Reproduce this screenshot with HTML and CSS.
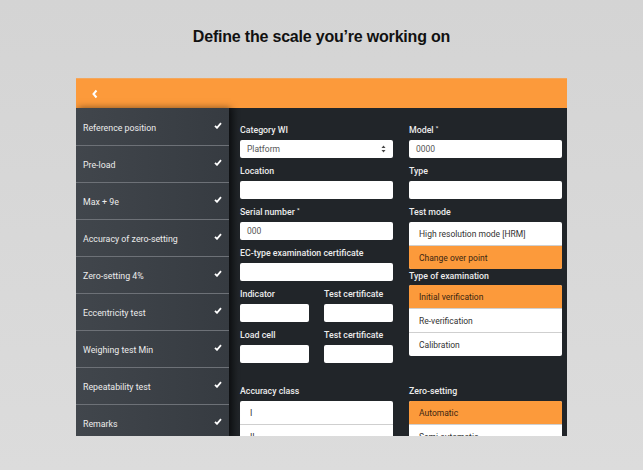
FILE: index.html
```html
<!DOCTYPE html>
<html lang="en">

<head>
    <meta charset="UTF-8">
    <meta name="viewport" content="width=device-width, initial-scale=1.0">
    <title>Define the scale</title>
    <link rel="stylesheet" href="styles.css">
</head>

<body>
    <h1 class="title">Define the scale you’re working on</h1>
    <div class="app">
        <div class="app-header">
            <svg class="back" width="8" height="10" viewBox="0 0 8 10">
                <polyline points="5.5,1.5 2.5,5 5.5,8.5" fill="none" stroke="#fff" stroke-width="2" />
            </svg>
        </div>
        <div class="app-body">
            <div class="sidebar">
                <div class="sidebar-item">Reference position<span class="check"></span></div>
                <div class="sidebar-item">Pre-load<span class="check"></span></div>
                <div class="sidebar-item">Max + 9e<span class="check"></span></div>
                <div class="sidebar-item">Accuracy of zero-setting<span class="check"></span></div>
                <div class="sidebar-item">Zero-setting 4%<span class="check"></span></div>
                <div class="sidebar-item">Eccentricity test<span class="check"></span></div>
                <div class="sidebar-item">Weighing test Min<span class="check"></span></div>
                <div class="sidebar-item">Repeatability test<span class="check"></span></div>
                <div class="sidebar-item">Remarks<span class="check"></span></div>
            </div>
            <div class="main">
                <div class="form-column">
                    <div class="field">
                        <div class="label">Category WI</div>
                        <div class="input select">Platform
                            <svg class="arrows" width="5" height="8" viewBox="0 0 5 8">
                                <polygon points="2.5,0.5 4.5,3 0.5,3" fill="#444" />
                                <polygon points="0.5,5 4.5,5 2.5,7.5" fill="#444" />
                            </svg>
                        </div>
                    </div>
                    <div class="field">
                        <div class="label">Location</div>
                        <div class="input"></div>
                    </div>
                    <div class="field">
                        <div class="label">Serial number <sup>*</sup></div>
                        <div class="input">000</div>
                    </div>
                    <div class="field">
                        <div class="label">EC-type examination certificate</div>
                        <div class="input"></div>
                    </div>
                    <div class="field-pair">
                        <div class="field">
                            <div class="label">Indicator</div>
                            <div class="input"></div>
                        </div>
                        <div class="field">
                            <div class="label">Test certificate</div>
                            <div class="input"></div>
                        </div>
                    </div>
                    <div class="field-pair">
                        <div class="field">
                            <div class="label">Load cell</div>
                            <div class="input"></div>
                        </div>
                        <div class="field">
                            <div class="label">Test certificate</div>
                            <div class="input"></div>
                        </div>
                    </div>
                </div>
                <div class="form-column">
                    <div class="field">
                        <div class="label">Model <sup>*</sup></div>
                        <div class="input">0000</div>
                    </div>
                    <div class="field">
                        <div class="label">Type</div>
                        <div class="input"></div>
                    </div>
                    <div class="field field-list">
                        <div class="label">Test mode</div>
                        <div class="options">
                            <div class="option">High resolution mode [HRM]</div>
                            <div class="option active">Change over point</div>
                        </div>
                    </div>
                    <div class="field field-list">
                        <div class="label label-tight">Type of examination</div>
                        <div class="options">
                            <div class="option active">Initial verification</div>
                            <div class="option">Re-verification</div>
                            <div class="option">Calibration</div>
                        </div>
                    </div>
                </div>
                <div class="form-column">
                    <div class="field">
                        <div class="label">Accuracy class</div>
                        <div class="options">
                            <div class="option">I</div>
                            <div class="option">II</div>
                        </div>
                    </div>
                </div>
                <div class="form-column">
                    <div class="field">
                        <div class="label">Zero-setting</div>
                        <div class="options">
                            <div class="option active">Automatic</div>
                            <div class="option">Semi automatic</div>
                        </div>
                    </div>
                </div>
            </div>
        </div>
    </div>
</body>

</html>
```

FILE: styles.css
```css
* {
    margin: 0;
    padding: 0;
    box-sizing: border-box;
}

body {
    height: 470px;
    overflow: hidden;
    background: linear-gradient(to bottom, #d4d4d4, #dcdcdc);
    font-family: Roboto, "Liberation Sans", sans-serif;
}

.title {
    margin: 27px 0 31px;
    line-height: 20px;
    text-align: center;
    font-family: "Liberation Sans", Arial, sans-serif;
    font-size: 16px;
    font-weight: bold;
    letter-spacing: -0.2px;
    color: #111;
}

.app {
    width: 491px;
    height: 358px;
    margin: 0 auto;
    overflow: hidden;
    background: #212529;
}

.app-header {
    height: 30px;
    background: #fc9a3b;
    border-top: 1px solid #f4a75c;
    display: flex;
    align-items: center;
    padding-left: 15px;
}

.back {
    display: block;
}

.app-body {
    display: flex;
    height: 328px;
}

.sidebar {
    width: 153px;
    flex-shrink: 0;
    position: relative;
    z-index: 2;
    background: linear-gradient(to right, #41464c, #363b41);
    box-shadow: 2px 0 7px rgba(0, 0, 0, .5);
}

.sidebar-item {
    height: 37px;
    display: flex;
    align-items: center;
    justify-content: space-between;
    padding: 1px 7px 0 7px;
    border-bottom: 1px solid #6d7177;
    color: #ececec;
    font-size: 8.8px;
    font-weight: 400;
}

.sidebar-item:first-child {
    height: 38px;
    padding-top: 2px;
}

.check {
    width: 8px;
    height: 7px;
    margin-top: -4px;
    background: url("data:image/svg+xml,%3Csvg xmlns='http://www.w3.org/2000/svg' viewBox='0 0 8 7'%3E%3Cpolyline points='1,3.8 3,5.8 7,1.2' fill='none' stroke='white' stroke-width='1.8'/%3E%3C/svg%3E") no-repeat center;
}

.main {
    flex: 1;
    padding: 15px 5px 0 11px;
    display: grid;
    grid-template-columns: 153px 153px;
    grid-template-rows: 245px auto;
    gap: 16px;
    background: linear-gradient(to right, #16191c, #212529 10px);
}

.form-column {
    display: flex;
    flex-direction: column;
}

.field {
    margin-bottom: 6px;
}

.field-list {
    margin-bottom: 0;
}

.field-pair {
    display: flex;
    gap: 15px;
}

.field-pair .field {
    flex: 1;
}

.label {
    height: 14px;
    line-height: 14px;
    margin-bottom: 3px;
    font-size: 8.8px;
    font-weight: 500;
    color: #ececec;
}

.label-tight {
    margin-bottom: 2px;
}

.label sup {
    font-size: 6px;
    line-height: 0;
    vertical-align: 3px;
}

.input {
    height: 18px;
    background: #fff;
    border-radius: 2px;
    padding: 0 7px;
    display: flex;
    align-items: center;
    font-size: 8.5px;
    color: #555;
}

.select {
    justify-content: space-between;
}

.options {
    background: #fff;
    border-radius: 2px;
    overflow: hidden;
}

.option {
    height: 23px;
    display: flex;
    align-items: center;
    padding: 0 10px;
    font-size: 8.5px;
    color: #333;
}

.option+.option {
    height: 24px;
    border-top: 1px solid #cfcfcf;
}

.option.active {
    background: #fc9a3b;
    color: #3b2612;
}
```
